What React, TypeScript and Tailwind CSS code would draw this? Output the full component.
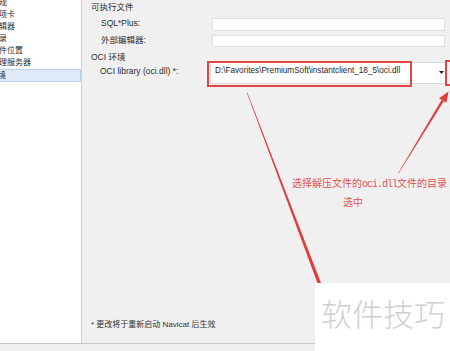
import React from "react";

const sans = "font-['Liberation_Sans','Noto_Sans_CJK_SC',sans-serif]";

const items = ["常规", "选项卡", "编辑器", "记录", "文件位置", "代理服务器", "环境"];

export default function App() {
  return (
    <div className={`relative w-[450px] h-[351px] overflow-hidden bg-[#f0f0f0] ${sans} text-[#2b2b2b]`}>
      <div className="flex h-[343px]">
        {/* sidebar */}
        <div className="w-[82px] shrink-0 h-full bg-white border-r border-[#cfcfcf] overflow-hidden">
          <div className="-mt-[3.5px] text-[8px] leading-[12.1px]">
            {items.map((t, i) => (
              <div
                key={t}
                className={
                  i === items.length - 1
                    ? "h-[12.6px] bg-[#dfeaf8] border-y border-r border-[#b9d2ef] -ml-[1px] whitespace-nowrap"
                    : "h-[12.1px] whitespace-nowrap"
                }
              >
                <span className="inline-block -ml-[9px]">{t}</span>
              </div>
            ))}
          </div>
        </div>

        {/* main panel */}
        <div className="flex-1 h-full flex flex-col pl-[9px] pr-[5px] pt-[1px] text-[8.5px] leading-[12px]">
          <div className="h-[12px]">可执行文件</div>
          <div className="mt-[5px] flex h-[13px]">
            <div className="w-[121px] shrink-0 pl-[10px] -mt-[1px]">SQL*Plus:</div>
            <div className="flex-1 bg-white border border-[#e0e0e0]" />
          </div>
          <div className="mt-[4px] flex h-[12px]">
            <div className="w-[121px] shrink-0 pl-[10px] -mt-[1px]">外部编辑器:</div>
            <div className="flex-1 bg-white border border-[#e0e0e0]" />
          </div>
          <div className="mt-[4px] h-[12px]">OCI 环境</div>
          <div className="-mt-[1px] flex h-[22px] -mr-[2px]">
            <div className="w-[119px] shrink-0 pl-[9px] pt-[2.5px] whitespace-nowrap">OCI library (oci.dll) *:</div>
            <div className="flex-1 min-w-0 bg-white border border-[#dadada] flex items-start justify-between pl-[4px] pr-[2px] pt-[2px]">
              <span className="text-[8.2px] whitespace-nowrap text-[#1e1e1e]">D:\Favorites\PremiumSoft\instantclient_18_5\oci.dll</span>
              <svg width="5" height="3" viewBox="0 0 5 3" className="mt-[6px] shrink-0">
                <polygon points="0,0 5,0 2.5,3" fill="#222" />
              </svg>
            </div>
          </div>
          <div className="mt-auto mb-[12px] text-[8px] leading-[12px] text-[#333]">* 更改将于重新启动 Navicat 后生效</div>
        </div>
      </div>
      <div className="h-[8px] border-t border-[#c9c9c9] bg-[#f0f0f0]" />

      {/* annotation boxes */}
      <div className="absolute left-[207px] top-[61px] w-[205px] h-[26px] border-2 border-[#e04646]" />
      <div className="absolute left-[445px] top-[60px] w-[10px] h-[26px] border-2 border-[#e04646]" />

      {/* arrows */}
      <svg className="absolute left-0 top-0 pointer-events-none" width="450" height="351" viewBox="0 0 450 351">
        <polygon points="246.7,92.6 247.3,92.4 321.6,284.4 318.4,285.6" fill="#e03c3c" />
        <polygon points="398.1,173.2 398.5,173.4 443.8,101.2 441.7,99.8" fill="#e03c3c" />
        <polygon points="448.5,91.5 446.4,102.8 439.1,98.2" fill="#e03c3c" />
      </svg>

      {/* annotation text */}
      <div className="absolute left-[292px] top-[178px] text-[10px] leading-[10px] whitespace-nowrap text-[#df5256] font-['Noto_Sans_CJK_SC',sans-serif]">
        选择解压文件的<span className="font-['Liberation_Mono',monospace] tracking-[-1px]">oci.dll</span>文件的目录
      </div>
      <div className="absolute left-[343px] top-[196.5px] text-[10px] leading-[10px] whitespace-nowrap text-[#df5256] font-['Noto_Sans_CJK_SC',sans-serif]">
        选中
      </div>

      {/* watermark */}
      <div className="absolute right-0 bottom-0 w-[135px] h-[68px] bg-white pl-[6px] pt-[14px]">
        <div className="text-[31px] leading-[31px] font-light text-[#d0d0d0] whitespace-nowrap font-['Noto_Sans_CJK_SC',sans-serif]">软件技巧</div>
      </div>
    </div>
  );
}
